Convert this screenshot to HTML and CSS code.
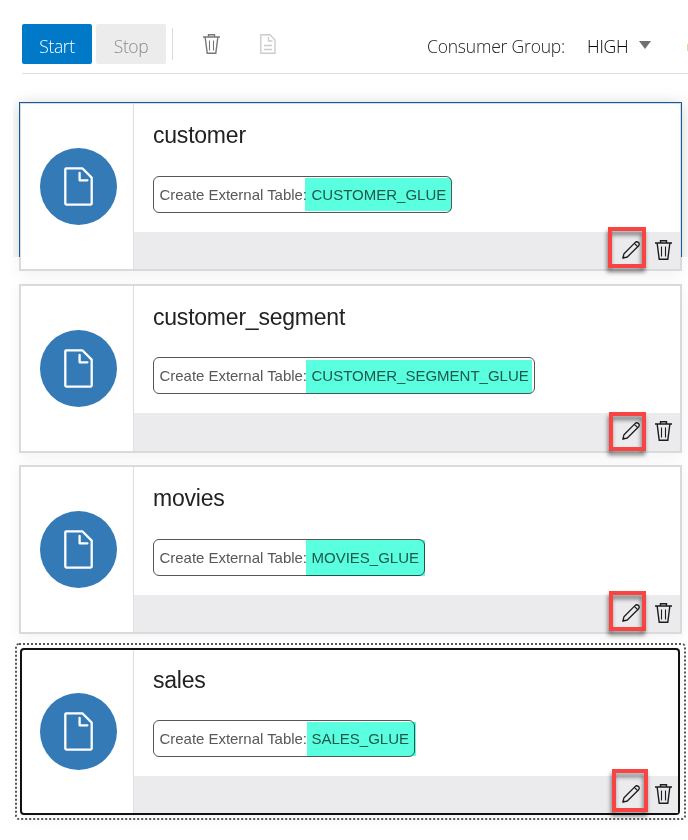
FILE: index.html
```html
<!DOCTYPE html>
<html lang="en">
<head>
<meta charset="utf-8">
<title>Data Load</title>
<link rel="stylesheet" href="styles.css">
</head>
<body>
<svg class="defs" width="0" height="0">
  <symbol id="trash" viewBox="0 0 17 20">
    <path d="M0 3H17M5.5 3V.75H11.5V3M2.2 3.5L4.2 19.2H12.8L14.8 3.5" fill="none" stroke="currentColor" stroke-width="1.4"/>
    <path d="M6.5 6.5V16.5M10.5 6.5V16.5" fill="none" stroke="currentColor" stroke-width="1.1"/>
  </symbol>
  <symbol id="pencil" viewBox="0 0 18 18">
    <path d="M.8 17.2L2 12.7L13 1.6Q14.7 0 16.5 1.5Q18 3.2 16.4 5L5.3 16ZM12.4 2.4L15.6 5.6" fill="none" stroke="currentColor" stroke-width="1.3" stroke-linejoin="round"/>
    <path d="M.6 17.4L1.3 14.7L3.4 16.7Z" fill="currentColor"/>
  </symbol>
  <symbol id="page" viewBox="0 0 29 39">
    <path d="M1.3 2.2Q1.3 1.3 2.2 1.3H18.3L27.7 10.6V36.6Q27.7 37.6 26.8 37.6H2.2Q1.3 37.6 1.3 36.6ZM15.6 6V13.3H23.4" fill="none" stroke="#fff" stroke-width="2.3" stroke-linecap="round" stroke-linejoin="round"/>
  </symbol>
</svg>

<header class="toolbar">
  <button class="btn btn-start">Start</button>
  <button class="btn btn-stop">Stop</button>
  <span class="separator"></span>
  <svg class="tool-trash" width="17" height="20"><use href="#trash"/></svg>
  <svg class="tool-doc" width="16" height="20" viewBox="0 0 16 20" fill="none" stroke="currentColor" stroke-width="1.4">
    <path d="M.8.8H10L15 6V19.2H.8ZM8.5 3V7H12.5M4 11.5H12M4 15.5H12"/>
  </svg>
  <span class="label">Consumer Group:</span>
  <span class="value">HIGH</span>
  <span class="arrow"></span>
  <span class="edge"></span>
</header>

<main class="list">
  <div class="drag-area"><div class="drag-frame"></div></div>

  <section class="card card-customer">
    <div class="side"><div class="disc"><svg width="29" height="39"><use href="#page"/></svg></div></div>
    <div class="main">
      <div class="body">
        <h2>customer</h2>
        <div class="pill"><span class="pill-text">Create External Table: </span><span class="pill-name">CUSTOMER_GLUE</span><i class="mark"></i></div>
      </div>
      <div class="foot"><svg class="edit" width="18" height="18"><use href="#pencil"/></svg><svg width="17" height="20"><use href="#trash"/></svg><i class="callout"></i></div>
    </div>
  </section>

  <section class="card card-segment">
    <div class="side"><div class="disc"><svg width="29" height="39"><use href="#page"/></svg></div></div>
    <div class="main">
      <div class="body">
        <h2>customer_segment</h2>
        <div class="pill"><span class="pill-text">Create External Table: </span><span class="pill-name">CUSTOMER_SEGMENT_GLUE</span><i class="mark"></i></div>
      </div>
      <div class="foot"><svg class="edit" width="18" height="18"><use href="#pencil"/></svg><svg width="17" height="20"><use href="#trash"/></svg><i class="callout"></i></div>
    </div>
  </section>

  <section class="card card-movies">
    <div class="side"><div class="disc"><svg width="29" height="39"><use href="#page"/></svg></div></div>
    <div class="main">
      <div class="body">
        <h2>movies</h2>
        <div class="pill"><span class="pill-text">Create External Table: </span><span class="pill-name">MOVIES_GLUE</span><i class="mark"></i></div>
      </div>
      <div class="foot"><svg class="edit" width="18" height="18"><use href="#pencil"/></svg><svg width="17" height="20"><use href="#trash"/></svg><i class="callout"></i></div>
    </div>
  </section>

  <section class="card card-sales">
    <div class="side"><div class="disc"><svg width="29" height="39"><use href="#page"/></svg></div></div>
    <div class="main">
      <div class="body">
        <h2>sales</h2>
        <div class="pill"><span class="pill-text">Create External Table: </span><span class="pill-name">SALES_GLUE</span><i class="mark"></i></div>
      </div>
      <div class="foot"><svg class="edit" width="18" height="18"><use href="#pencil"/></svg><svg width="17" height="20"><use href="#trash"/></svg><i class="callout"></i></div>
    </div>
    <svg class="focus" width="671" height="177"><rect x="1" y="1" width="669" height="175" rx="3" fill="none" stroke="#555" stroke-width="2" stroke-dasharray="2 2"/></svg>
  </section>
</main>
</body>
</html>
```
FILE: styles.css
```css
*, *::before { box-sizing: border-box; }
body { margin: 0; width: 688px; height: 840px; overflow: hidden; background: #fff; font-family: "Liberation Sans", Arial, sans-serif; }
.defs { position: absolute; }

.toolbar { display: flex; align-items: center; height: 50px; margin: 24px 0 0 22px; padding-bottom: 9px; border-bottom: 1px solid #dedede; font-family: "Open Sans", "Noto Sans", sans-serif; }
.btn { width: 70px; height: 40px; margin: 0 4px 0 0; padding: 3px 0 0; border: 0; border-radius: 2px; font: 300 17.5px "Open Sans", "Noto Sans", sans-serif; letter-spacing: -0.4px; }
.btn-start { background: #007ac8; color: #fff; }
.btn-stop { background: #ececec; color: #8a8a8a; }
.separator { width: 1px; height: 32px; margin-left: 2px; background: #dadada; }
.tool-trash { margin-left: 30px; color: #777; }
.tool-trash + .tool-doc { margin-left: 40px; color: #ccc; }
.label, .value { font-size: 17.5px; font-weight: 300; line-height: 24px; padding-top: 3px; white-space: nowrap; }
.label { width: 136px; margin-left: 151px; color: #222; letter-spacing: -0.2px; }
.value { width: 42px; margin-left: 24px; color: #000; letter-spacing: -0.2px; }
.arrow { width: 12px; margin: 1px 0 0 10px; border: 6px solid transparent; border-top: 8px solid #707070; border-bottom: 0; }
.edge { width: 1px; height: 7px; margin: 6px 0 0 auto; background: #f2cfa4; }

.list { position: relative; height: 766px; padding: 28px 6px 0 19px; }
.drag-area { position: absolute; left: 13px; top: 11px; width: 675px; height: 172px; overflow: hidden; }
.drag-frame { width: 663px; height: 200px; margin: 17px 0 0 6px; box-shadow: 0 2px 16px rgba(0,0,0,.13); }
.card { position: relative; display: flex; height: 169px; border: 2px solid #dadada; background: #fff; box-shadow: 0 3px 14px rgba(0,0,0,.06); }
.card-customer::before { content: ""; position: absolute; left: -2px; top: -2px; width: 663px; height: 155px; border: 1px solid #185a9d; border-bottom: 0; }
.card-segment { margin-top: 13px; }
.card-movies { margin-top: 12px; }
.card-sales { height: 167px; margin: 14px 2px 0 1px; border: 2px solid #111; border-radius: 4px; }
.side { width: 113px; flex: none; padding: 44px 0 0 19px; border-right: 1px solid #dedede; }
.card-sales .side { width: 112px; padding: 43px 0 0 18px; }
.disc { width: 77px; height: 77px; padding: 19px 0 0 24px; border-radius: 50%; background: #337ab7; }
.disc svg { display: block; }
.main { flex: 1; display: flex; flex-direction: column; min-width: 0; }
.body { flex: 1; padding-left: 19px; }
h2 { height: 32px; margin: 15px 0 25px; font-size: 23px; letter-spacing: -0.22px; line-height: 32px; font-weight: 400; color: #222; white-space: nowrap; }
.card-segment h2 { margin-bottom: 24px; }
.card-sales h2 { margin: 14px 0 24px; }
.pill { position: relative; display: flex; align-items: center; height: 37px; padding: 0 0 0 5.5px; border: 1px solid #555; border-radius: 6px; font-size: 15px; color: #585858; white-space: nowrap; }
.pill-text { width: 152px; white-space: pre; letter-spacing: -0.03px; }
.pill-name { color: #585858; }
.mark { position: absolute; top: 1px; left: 151px; height: 33px; background: #5affdf; mix-blend-mode: multiply; }
.card-customer .pill { width: 299px; }
.card-customer .mark { width: 146px; }
.card-segment .pill { width: 382px; }
.card-segment .mark { left: 152px; top: 2px; width: 226px; }
.card-movies .pill { width: 272px; }
.card-movies .mark { left: 152px; top: 0; width: 119px; height: 36px; }
.card-sales .pill { width: 262px; }
.card-sales .mark { left: 153px; top: 1px; width: 109px; height: 34px; }

.foot { position: relative; flex: none; display: flex; justify-content: flex-end; height: 37px; padding: 8px 8px 0 0; background: #ebebed; color: #1c1c1c; }
.card-segment .foot { height: 38px; }
.card-sales .foot { padding-right: 6px; }
.edit { margin: 1px 15px 0 0; }
.callout { position: absolute; left: 474px; top: -5px; width: 38px; height: 41px; border: 4px solid #fa4343; filter: drop-shadow(-1px 4px 2px rgba(0,0,0,.5)); }
.card-segment .callout { left: 475px; top: -1px; width: 37px; height: 39px; }
.card-movies .callout { left: 475px; top: -4px; width: 37px; height: 40px; }
.card-sales .callout { left: 478px; top: -7px; width: 36px; height: 43px; }
.focus { position: absolute; left: -7px; top: -7px; }
```
